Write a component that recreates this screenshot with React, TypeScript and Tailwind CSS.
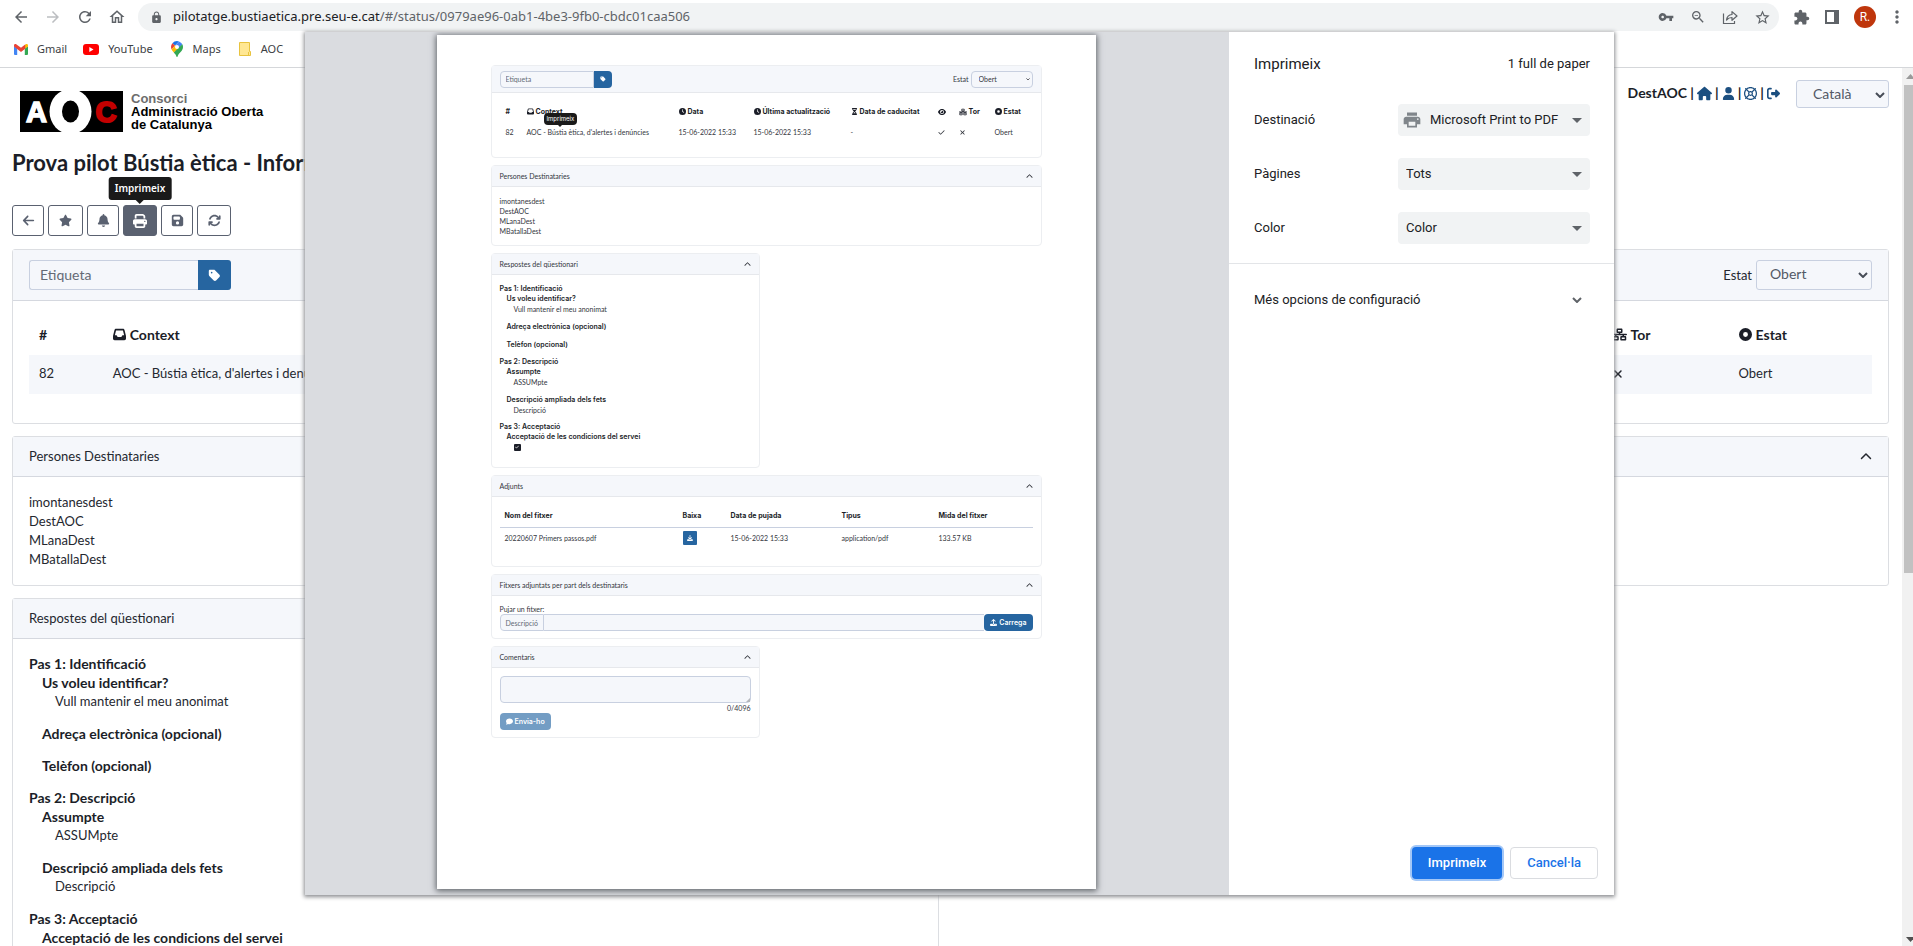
import React from "react";
import {
  FaArrowLeft,
  FaArrowsRotate,
  FaBell,
  FaCheck,
  FaChevronUp,
  FaCircleDot,
  FaClock,
  FaComment,
  FaDownload,
  FaEye,
  FaFloppyDisk,
  FaHourglassHalf,
  FaHouse,
  FaInbox,
  FaNetworkWired,
  FaPrint,
  FaRegLifeRing,
  FaRightFromBracket,
  FaStar,
  FaTag,
  FaUpload,
  FaUser,
  FaXmark,
} from "react-icons/fa6";
import {
  MdArrowBack,
  MdArrowForward,
  MdExtension,
  MdLock,
  MdMoreVert,
  MdOutlineHome,
  MdPrint,
  MdRefresh,
  MdStarBorder,
  MdVpnKey,
  MdZoomOut,
} from "react-icons/md";

type Answer = { question: string; value?: string; checked?: boolean };
type Step = { title: string; answers: Answer[] };

const recipients = ["imontanesdest", "DestAOC", "MLanaDest", "MBatallaDest"];

const steps: Step[] = [
  {
    title: "Pas 1: Identificació",
    answers: [
      { question: "Us voleu identificar?", value: "Vull mantenir el meu anonimat" },
      { question: "Adreça electrònica (opcional)" },
      { question: "Telèfon (opcional)" },
    ],
  },
  {
    title: "Pas 2: Descripció",
    answers: [
      { question: "Assumpte", value: "ASSUMpte" },
      { question: "Descripció ampliada dels fets", value: "Descripció" },
    ],
  },
  {
    title: "Pas 3: Acceptació",
    answers: [{ question: "Acceptació de les condicions del servei", checked: true }],
  },
];

function GmailIcon() {
  return (
    <svg width="14" height="11" viewBox="0 0 14 11">
      <path d="M0 1.5V10a1 1 0 0 0 1 1h2.2V4.6L0 2z" fill="#4285f4" />
      <path d="M14 1.5V10a1 1 0 0 1-1 1h-2.2V4.6L14 2z" fill="#34a853" />
      <path d="M10.800 1v3.800L14 2.400V1.500C14 0 12.500-.4 11.500.4z" fill="#fbbc04" />
      <path d="M0 1.500C0 0 1.500-.4 2.500.4L7 3.800 11.200.6v4.100L7 7.900 2.800 4.700 0 2.500z" fill="#ea4335" />
    </svg>
  );
}

function YouTubeIcon() {
  return (
    <svg width="16" height="11" viewBox="0 0 16 11">
      <rect width="16" height="11" rx="3" fill="#f00" />
      <path d="M6.300 3v5L10.500 5.500z" fill="#fff" />
    </svg>
  );
}

function MapsIcon() {
  return (
    <svg width="12" height="16" viewBox="0 0 12 16">
      <path d="M6 0a6 6 0 0 0-4.600 2.200L4 4.500 8 .4A6 6 0 0 0 6 0z" fill="#1a73e8" />
      <path d="M1.400 2.200A6 6 0 0 0 .6 8.400L4 4.500z" fill="#ea4335" />
      <path d="M8 .4 4.200 4.800 7.800 7.400 11.300 3.300A6 6 0 0 0 8 .4z" fill="#4285f4" />
      <path d="M.6 8.400c.5 1 1.300 1.900 2.200 3.100L7.800 7.400 4.300 4.300z" fill="#fbbc04" />
      <path d="M11.300 3.300 2.800 11.500C4.400 13.300 5 14 5.400 15.500c.2.700 1 .7 1.200 0C7.500 11.500 12 10.500 12 6c0-1-.2-1.900-.7-2.700z" fill="#34a853" />
      <circle cx="6" cy="6" r="2" fill="#fff" />
    </svg>
  );
}

function FolderIcon() {
  return (
    <svg width="12" height="14" viewBox="0 0 12 14">
      <path d="M.5.5h10v9h1v4H.5z" fill="#ffe793" stroke="#e8c33f" />
      <path d="M9.500 10v3.500" stroke="#e8c33f" />
    </svg>
  );
}

function ShareIcon() {
  return (
    <svg width="16" height="16" viewBox="0 0 16 16" fill="none" stroke="#5f6368" strokeWidth="1.200">
      <path d="M1.500 4.500v10h11V12" />
      <path d="M4.500 11c.4-3.500 2.500-5.300 5.500-5.500V2.600l5 4.400-5 4.300V8.500c-2.500 0-4 .7-5.500 2.500z" strokeLinejoin="round" />
    </svg>
  );
}

function SidePanelIcon() {
  return (
    <svg width="14" height="14" viewBox="0 0 14 14">
      <rect x="1" y="1" width="12" height="12" fill="none" stroke="#5f6368" strokeWidth="2" />
      <rect x="9" y="1" width="4" height="12" fill="#5f6368" />
    </svg>
  );
}

function Caret({ className }: { className: string }) {
  return (
    <svg className={className} viewBox="0 0 10 6" fill="none" stroke="currentColor" strokeWidth="2">
      <path d="M1 1l4 4 4-4" />
    </svg>
  );
}

function BrowserBar() {
  return (
    <header className="h-[68px] shrink-0 border-b border-[#d5d7da] bg-white font-['Noto_Sans',sans-serif] text-[#3c4043]">
      <div className="flex h-[34px] items-center pl-3 pr-1.5 text-[#5f6368]">
        <nav className="flex gap-3.5" aria-label="Navegació">
          <button aria-label="Enrere"><MdArrowBack size={18} /></button>
          <button aria-label="Endavant" className="text-[#bcbec1]"><MdArrowForward size={18} /></button>
          <button aria-label="Torna a carregar"><MdRefresh size={18} /></button>
          <button aria-label="Inici"><MdOutlineHome size={18} /></button>
        </nav>
        <div className="ml-3 flex h-7 flex-1 items-center rounded-full bg-[#f1f3f4] pl-3 pr-2">
          <MdLock size={13} />
          <p className="ml-2.5 flex-1 text-[13px]">
            <span className="text-[#202124]">pilotatge.bustiaetica.pre.seu-e.cat</span>
            /#/status/0979ae96-0ab1-4be3-9fb0-cbdc01caa506
          </p>
          <div className="flex items-center gap-4">
            <MdVpnKey size={16} />
            <MdZoomOut size={16} />
            <ShareIcon />
            <MdStarBorder size={17} />
          </div>
        </div>
        <div className="ml-3.5 flex items-center gap-[15px]">
          <MdExtension size={17} />
          <SidePanelIcon />
          <span className="grid size-[22px] place-items-center rounded-full bg-[#bf360c] font-[Roboto] text-xs text-white">R.</span>
          <MdMoreVert size={20} className="-ml-1" />
        </div>
      </div>
      <div className="flex h-[30px] items-center pl-3.5 text-[11px]">
        <a href="#" className="flex items-center gap-[9px]"><GmailIcon />Gmail</a>
        <a href="#" className="ml-4 flex items-center gap-[9px]"><YouTubeIcon />YouTube</a>
        <a href="#" className="ml-[18px] flex items-center gap-[10px]"><MapsIcon />Maps</a>
        <a href="#" className="ml-[18px] flex items-center gap-[10px]"><FolderIcon />AOC</a>
      </div>
    </header>
  );
}

function Logo() {
  return (
    <div className="flex items-center gap-2">
      <svg width="103" height="41" viewBox="0 0 103 41" role="img" aria-label="AOC">
        <rect width="103" height="41" fill="#000" />
        <ellipse cx="50.500" cy="20.500" rx="21" ry="22.500" fill="#fff" />
        <ellipse cx="50.500" cy="20.500" rx="8.500" ry="11" fill="#000" />
        <text x="6" y="31" fontFamily="Liberation Sans" fontWeight="700" fontSize="29" fill="#fff" stroke="#fff" strokeWidth="1.500">A</text>
        <text x="75.500" y="31" fontFamily="Liberation Sans" fontWeight="700" fontSize="29" fill="#c30000" stroke="#c30000" strokeWidth="2">C</text>
      </svg>
      <p className="font-['Liberation_Sans',sans-serif] text-[13px] font-bold leading-[13px] text-black">
        <span className="text-[#6d6d6d]">Consorci</span>
        <br />
        Administració Oberta
        <br />
        de Catalunya
      </p>
    </div>
  );
}

function UserBar() {
  return (
    <div className="flex items-start gap-4">
      <div className="flex h-6 items-center gap-[3px] pt-0.5 text-sm font-bold text-[#1b1e28]">
        DestAOC |
        <a href="#" aria-label="Inici" className="text-[#1c4f80]"><FaHouse size={15} /></a>|
        <a href="#" aria-label="Preferències" className="text-[#1c4f80]"><FaUser size={13} /></a>|
        <a href="#" aria-label="Ajuda" className="text-[#1c4f80]"><FaRegLifeRing size={13} /></a>|
        <a href="#" aria-label="Surt" className="text-[#1c4f80]"><FaRightFromBracket size={13} /></a>
      </div>
      <div className="relative">
        <select aria-label="Idioma" className="h-7 w-[93px] appearance-none rounded-[3px] border border-[#c8d0e0] bg-[#f5f7fb] pl-4 text-sm text-[#525966]">
          <option>Català</option>
        </select>
        <Caret className="pointer-events-none absolute right-1 top-3 w-2.5 text-[#474d57]" />
      </div>
    </div>
  );
}

const toolButton = "grid h-[31px] place-items-center rounded-[3px] border border-[#5a6170] text-[#5a6170]";

function Toolbar() {
  return (
    <div className="flex gap-1">
      <button aria-label="Enrere" className={`${toolButton} w-8`}><FaArrowLeft size={13} /></button>
      <button aria-label="Destacat" className={`${toolButton} w-[35px]`}><FaStar size={13} /></button>
      <button aria-label="Notificacions" className={`${toolButton} w-8`}><FaBell size={13} /></button>
      <div className="relative">
        <button aria-label="Imprimeix" className={`${toolButton} w-[34px] bg-[#5a6170]`}><FaPrint size={14} className="text-white" /></button>
        <div role="tooltip" className="absolute bottom-9 left-1/2 -translate-x-1/2 rounded-[3px] bg-[#1a1a1a] px-[6px] font-['Noto_Sans',sans-serif] text-[10px] font-semibold leading-[23px] text-white">
          Imprimeix
          <span className="absolute left-1/2 top-full -translate-x-1/2 border-x-4 border-t-4 border-x-transparent border-t-[#1a1a1a]" />
        </div>
      </div>
      <button aria-label="Desa" className={`${toolButton} w-8`}><FaFloppyDisk size={13} /></button>
      <button aria-label="Refresca" className={`${toolButton} w-[34px]`}><FaArrowsRotate size={13} /></button>
    </div>
  );
}

function Card({ title, children, className = "" }: { title: string; children?: React.ReactNode; className?: string }) {
  return (
    <section className={`rounded-[3px] border border-[#dcdee2] ${className}`}>
      <div className="flex h-10 items-center justify-between border-b border-[#d5d8df] bg-[#f5f7fb] px-4">
        <h2>{title}</h2>
        <button aria-label="Replega"><FaChevronUp size={12} /></button>
      </div>
      {children}
    </section>
  );
}

function ReportPage() {
  return (
    <main className="min-w-0 flex-1 overflow-hidden pl-3 pr-[13px] pt-3 font-[Lato,sans-serif] text-[13px] leading-[19px] text-[#24272f]">
      <div className="flex items-start justify-between">
        <div className="pl-2 pt-[11px]"><Logo /></div>
        <UserBar />
      </div>
      <h1 className="mt-[19px] text-[22px] font-bold leading-6 text-[#1b1e28]">Prova pilot Bústia ètica - Informació</h1>
      <div className="mt-[30px]"><Toolbar /></div>

      <section className="mt-[13px] rounded-[3px] border border-[#dcdee2]">
        <div className="flex h-[51px] items-center justify-between border-b border-[#d5d8df] bg-[#f5f7fb] px-4">
          <div className="flex">
            <input aria-label="Etiqueta" placeholder="Etiqueta" className="h-[30px] w-[169px] rounded-l-[3px] border border-r-0 border-[#c8d0e0] px-2.5 pb-0.5 text-sm placeholder:text-[#646a75]" />
            <button aria-label="Desa l'etiqueta" className="grid w-[33px] place-items-center rounded-r-[3px] bg-[#2665a0] text-white"><FaTag size={13} /></button>
          </div>
          <div className="relative flex items-center gap-1">
            <label htmlFor="estat">Estat</label>
            <select id="estat" className="h-[30px] w-[116px] appearance-none rounded-[3px] border border-[#c8d0e0] pb-0.5 pl-[13px] text-sm text-[#525966]">
              <option>Obert</option>
            </select>
            <Caret className="pointer-events-none absolute right-1 top-3 w-2.5 text-[#474d57]" />
          </div>
        </div>
        <div className="px-4 pb-[29px] pt-[15px]">
          <table className="w-full table-fixed text-left">
            <colgroup>
              <col className="w-[4%]" />
              <col className="w-[81%]" />
              <col className="w-[7%]" />
              <col className="w-[8%]" />
            </colgroup>
            <thead>
              <tr className="h-[39px] text-sm font-bold text-[#1b1e28]">
                <th className="px-2.5 pb-0.5">#</th>
                <th className="px-2.5 pb-0.5"><span className="flex items-center gap-1"><FaInbox size={13} />Context</span></th>
                <th className="px-4 pb-0.5"><span className="flex items-center gap-1"><FaNetworkWired size={15} />Tor</span></th>
                <th className="px-3.5 pb-0.5"><span className="flex items-center gap-1"><FaCircleDot size={13} />Estat</span></th>
              </tr>
            </thead>
            <tbody>
              <tr className="h-[39px] bg-[#f5f7fb]">
                <td className="px-2.5 pb-0.5">82</td>
                <td className="px-2.5 pb-0.5">AOC - Bústia ètica, d'alertes i denúncies</td>
                <td className="px-4 pb-0.5"><FaXmark size={12} /></td>
                <td className="px-3.5 pb-0.5">Obert</td>
              </tr>
            </tbody>
          </table>
        </div>
      </section>

      <Card title="Persones Destinataries" className="mt-3">
        <ul className="py-4 pl-4">
          {recipients.map((name) => (
            <li key={name}>{name}</li>
          ))}
        </ul>
      </Card>

      <div className="mt-3 grid grid-cols-2 gap-6">
        <Card title="Respostes del qüestionari">
          <div className="space-y-[13px] px-4 pb-4 pt-[15px]">
            {steps.map((step) => (
              <div key={step.title}>
                <h3 className="text-sm font-bold leading-[19px] text-[#1b1e28]">{step.title}</h3>
                <div className="space-y-[13px] pl-[13px]">
                  {step.answers.map((a) => (
                    <div key={a.question}>
                      <h4 className="text-sm font-bold leading-[19px] text-[#1b1e28]">{a.question}</h4>
                      {a.value && <p className="pl-[13px]">{a.value}</p>}
                    </div>
                  ))}
                </div>
              </div>
            ))}
          </div>
        </Card>
      </div>
    </main>
  );
}

function ScrollBar() {
  return (
    <div className="flex w-[11px] shrink-0 flex-col justify-between overflow-hidden bg-[#f1f1f1] pl-0.5" aria-hidden="true">
      <div>
        <svg className="block" width="9" height="17" viewBox="0 0 9 17"><path d="M2 11l4.500-5L11 11z" fill="#9a9a9a" /></svg>
        <div className="h-[488px] bg-[#c1c1c1]" />
      </div>
      <svg className="block" width="9" height="17" viewBox="0 0 9 17"><path d="M2 8l4.500 5L11 8z" fill="#505050" /></svg>
    </div>
  );
}

function SheetCard({ title, children, className = "" }: { title: string; children: React.ReactNode; className?: string }) {
  return (
    <section className={`rounded-sm border border-[#eceef1] ${className}`}>
      <div className="flex h-[21px] items-center justify-between border-b border-[#e6e8ec] bg-[#f5f7fb] px-2">
        <h2>{title}</h2>
        <FaChevronUp size={7} />
      </div>
      {children}
    </section>
  );
}

// Miniature of the report, as it will come out on paper
function Sheet() {
  return (
    <article className="flex w-[659px] flex-col gap-[7px] bg-white px-[54px] pt-[30px] font-[Lato,sans-serif] text-[7px] leading-[10px] text-[#33363d] shadow-[0_1px_6px_1px_#5f6368]">
      <section className="h-[93px] rounded-sm border border-[#eceef1]">
        <div className="flex h-[27px] items-center justify-between border-b border-[#e6e8ec] bg-[#f5f7fb] px-2">
          <div className="flex">
            <input aria-label="Etiqueta" placeholder="Etiqueta" className="h-[17px] w-[94px] rounded-l-sm border border-[#c8d0e0] px-[5px] placeholder:text-[#646a75]" />
            <button aria-label="Desa l'etiqueta" className="grid w-[18px] place-items-center rounded-r-sm bg-[#2665a0] text-white"><FaTag size={6} /></button>
          </div>
          <div className="relative flex items-center gap-0.5">
            <label htmlFor="estat-full">Estat</label>
            <select id="estat-full" className="h-[17px] w-[62px] appearance-none rounded-sm border border-[#c8d0e0] pl-[7px]">
              <option>Obert</option>
            </select>
            <Caret className="pointer-events-none absolute right-[3px] top-[7px] w-1" />
          </div>
        </div>
        <div className="relative px-2 pt-2">
          <table className="w-full table-fixed text-left">
            <colgroup>
              <col className="w-[21px]" />
              <col className="w-[152px]" />
              <col className="w-[75px]" />
              <col className="w-[97px]" />
              <col className="w-[87px]" />
              <col className="w-[21px]" />
              <col className="w-[36px]" />
              <col />
            </colgroup>
            <thead>
              <tr className="h-[21px] whitespace-nowrap font-[Inter] text-[#1b1e28]">
                <th className="pl-1.5">#</th>
                <th className="pl-1.5"><span className="flex items-center gap-0.5"><FaInbox />Context</span></th>
                <th className="pl-1.5"><span className="flex items-center gap-0.5"><FaClock />Data</span></th>
                <th className="pl-1.5"><span className="flex items-center gap-0.5"><FaClock />Última actualització</span></th>
                <th className="pl-1.5"><span className="flex items-center gap-0.5"><FaHourglassHalf />Data de caducitat</span></th>
                <th className="pl-1.5"><FaEye size={8} /></th>
                <th className="pl-1.5"><span className="flex items-center gap-0.5"><FaNetworkWired size={8} />Tor</span></th>
                <th className="pl-1.5"><span className="flex items-center gap-0.5"><FaCircleDot />Estat</span></th>
              </tr>
            </thead>
            <tbody>
              <tr className="h-5 whitespace-nowrap">
                <td className="pl-1.5">82</td>
                <td className="pl-1.5">AOC - Bústia ètica, d'alertes i denúncies</td>
                <td className="pl-1.5">15-06-2022 15:33</td>
                <td className="pl-1.5">15-06-2022 15:33</td>
                <td className="pl-1.5">-</td>
                <td className="pl-1.5"><FaCheck /></td>
                <td className="pl-1.5"><FaXmark /></td>
                <td className="pl-1.5">Obert</td>
              </tr>
            </tbody>
          </table>
          <div role="tooltip" className="absolute left-[52px] top-5 rounded-sm bg-[#1a1a1a] px-[3px] font-[Inter] text-[6px] leading-3 text-white">
            Imprimeix
            <span className="absolute left-1/2 top-full -translate-x-1/2 border-x-2 border-t-2 border-x-transparent border-t-[#1a1a1a]" />
          </div>
        </div>
      </section>

      <SheetCard title="Persones Destinataries" className="h-[81px]">
        <ul className="px-2 pt-[9px]">
          {recipients.map((name) => (
            <li key={name}>{name}</li>
          ))}
        </ul>
      </SheetCard>

      <SheetCard title="Respostes del qüestionari" className="h-[215px] w-[269px]">
        <div className="space-y-[7px] px-2 pt-[9px]">
          {steps.map((step) => (
            <div key={step.title}>
              <h3 className="font-[Inter] font-semibold text-[#1b1e28]">{step.title}</h3>
              <div className="space-y-2 pl-[7px]">
                {step.answers.map((a) => (
                  <div key={a.question}>
                    <h4 className="font-[Inter] font-semibold text-[#1b1e28]">{a.question}</h4>
                    {a.value && <p className="pl-[7px]">{a.value}</p>}
                    {a.checked && (
                      <div className="grid h-[10px] pl-[7px]">
                        <span className="grid size-[7px] place-items-center self-center rounded-[1px] bg-[#1b1e28] text-white"><FaCheck size={4} /></span>
                      </div>
                    )}
                  </div>
                ))}
              </div>
            </div>
          ))}
        </div>
      </SheetCard>

      <SheetCard title="Adjunts" className="h-[92px]">
        <div className="px-2 pt-2">
          <table className="w-full table-fixed text-left">
            <colgroup>
              <col className="w-[178px]" />
              <col className="w-12" />
              <col className="w-[111px]" />
              <col className="w-[97px]" />
              <col />
            </colgroup>
            <thead>
              <tr className="h-[22px] border-b border-[#c8d0e0] font-[Inter] text-[#1b1e28]">
                <th className="pl-[5px]">Nom del fitxer</th>
                <th className="pl-[5px]">Baixa</th>
                <th className="pl-[5px]">Data de pujada</th>
                <th className="pl-[5px]">Tipus</th>
                <th className="pl-[5px]">Mida del fitxer</th>
              </tr>
            </thead>
            <tbody>
              <tr className="h-[22px]">
                <td className="pl-[5px]">20220607 Primers passos.pdf</td>
                <td className="pl-[5px]">
                  <button aria-label="Baixa" className="grid h-[14px] w-[14px] place-items-center rounded-[1px] bg-[#2665a0] text-white"><FaDownload size={6} /></button>
                </td>
                <td className="pl-[5px]">15-06-2022 15:33</td>
                <td className="pl-[5px]">application/pdf</td>
                <td className="pl-[5px]">133.57 KB</td>
              </tr>
            </tbody>
          </table>
        </div>
      </SheetCard>

      <SheetCard title="Fitxers adjuntats per part dels destinataris" className="h-[65px]">
        <div className="px-2 pt-2">
          <label htmlFor="fitxer">Pujar un fitxer:</label>
          <div className="flex h-[17px]">
            <span className="flex items-center rounded-l-sm border border-[#c8d0e0] bg-[#f5f7fb] px-[5px] text-[#646a75]">Descripció</span>
            <input id="fitxer" className="min-w-0 flex-1 border-y border-[#c8d0e0] bg-[#f5f7fb]" />
            <button className="flex items-center gap-0.5 rounded-sm bg-[#2665a0] px-[6px] font-[Inter] font-semibold text-white"><FaUpload />Carrega</button>
          </div>
        </div>
      </SheetCard>

      <SheetCard title="Comentaris" className="h-[92px] w-[269px]">
        <div className="px-2 pt-2">
          <div className="relative">
            <textarea aria-label="Comentaris" className="block h-[27px] w-full resize-none rounded-sm border border-[#c8d0e0] bg-[#f5f7fb]" />
            <svg className="absolute bottom-px right-px" width="4" height="4" viewBox="0 0 4 4"><path d="M4 0v4H0z" fill="#b3b6bb" /></svg>
          </div>
          <p className="text-right">0/4096</p>
          <button className="flex h-[17px] items-center gap-0.5 rounded-sm bg-[#739dc4] px-[6px] font-[Inter] font-semibold text-white"><FaComment />Envia-ho</button>
        </div>
      </SheetCard>
    </article>
  );
}

function PrintSelect({ id, label, value, icon }: { id: string; label: string; value: string; icon?: React.ReactNode }) {
  return (
    <div className="flex items-center justify-between">
      <label htmlFor={id}>{label}</label>
      <div className="relative w-48">
        {icon && <span className="pointer-events-none absolute left-1 top-1.5 text-[#80868b]">{icon}</span>}
        <select id={id} className={`h-8 w-full appearance-none rounded bg-[#f1f3f4] ${icon ? "pl-8" : "pl-2"}`}>
          <option>{value}</option>
        </select>
        <span className="pointer-events-none absolute right-2 top-3.5 border-x-[5px] border-t-[5px] border-x-transparent border-t-[#5f6368]" />
      </div>
    </div>
  );
}

function PrintDialog() {
  return (
    <div role="dialog" aria-label="Imprimeix" className="absolute bottom-[51px] left-[305px] right-[299px] top-8 flex bg-white shadow-[0_1px_4px_1px_#8b8d90]">
      <div className="flex min-w-0 flex-1 justify-center overflow-hidden bg-[#dadce0] pb-1.5 pr-0.5 pt-[3px]">
        <Sheet />
      </div>
      <aside className="flex w-[385px] flex-col font-[Roboto,sans-serif] text-[13px] text-[#202124]">
        <div className="flex h-16 items-center justify-between pl-[25px] pr-6">
          <h2 className="text-[15px]">Imprimeix</h2>
          <span>1 full de paper</span>
        </div>
        <div className="flex flex-col gap-[22px] border-b border-[#e3e5e8] pb-[19px] pl-[25px] pr-6 pt-2">
          <PrintSelect id="destinacio" label="Destinació" value="Microsoft Print to PDF" icon={<MdPrint size={20} />} />
          <PrintSelect id="pagines" label="Pàgines" value="Tots" />
          <PrintSelect id="color" label="Color" value="Color" />
        </div>
        <button className="flex h-[72px] items-center justify-between pl-[25px] pr-8 text-left">
          Més opcions de configuració
          <Caret className="w-2.5 text-[#5f6368]" />
        </button>
        <div className="mt-auto flex justify-end gap-2 p-4 font-medium">
          <button className="h-8 rounded bg-[#1a73e8] px-4 text-white ring-2 ring-[#a3c7f7]">Imprimeix</button>
          <button className="h-8 rounded border border-[#dadce0] px-4 text-[#1a73e8]">Cancel·la</button>
        </div>
      </aside>
    </div>
  );
}

function App() {
  return (
    <div className="relative flex h-screen flex-col overflow-hidden bg-white">
      <BrowserBar />
      <div className="flex min-h-0 flex-1">
        <ReportPage />
        <ScrollBar />
      </div>
      <PrintDialog />
    </div>
  );
}

export default App;
